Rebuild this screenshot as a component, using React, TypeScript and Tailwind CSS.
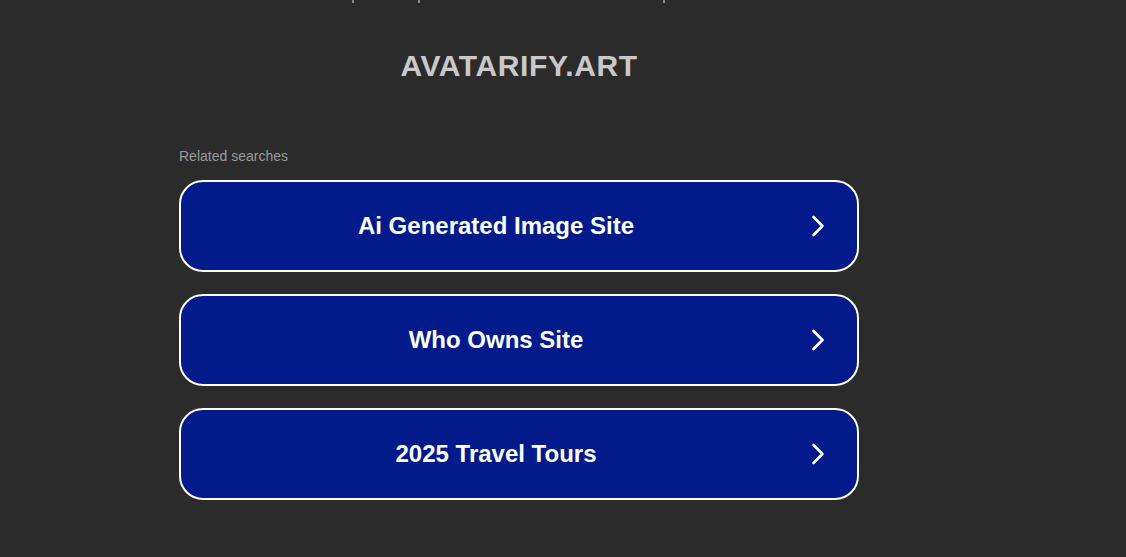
import React from "react";

const items = ["Ai Generated Image Site", "Who Owns Site", "2025 Travel Tours"];

function Chevron() {
  return (
    <svg width="14" height="22" viewBox="0 0 14 22" className="shrink-0 mr-[32px]">
      <polyline points="2.5,2 11.5,11 2.5,20" fill="none" stroke="#ffffff" strokeWidth="2.6" strokeLinecap="round" strokeLinejoin="round" />
    </svg>
  );
}

export default function App() {
  return (
    <div className="min-h-[557px] w-full bg-[#2b2b2b] overflow-hidden" style={{ fontFamily: '"Liberation Sans", Arial, sans-serif' }}>
      <div className="flex h-[4px] items-start">
        <span className="ml-[352px] block h-[3px] w-[2px] bg-[#8a8a8a]" />
        <span className="ml-[64px] block h-[3px] w-[2px] bg-[#8a8a8a]" />
        <span className="ml-[243px] block h-[3px] w-[2px] bg-[#8a8a8a]" />
      </div>
      <div className="ml-[179px] w-[680px]">
        <h1 className="pt-[44px] text-center text-[30px] leading-[36px] font-bold tracking-[0.6px] text-[#c9c9c9]">AVATARIFY.ART</h1>
        <div className="mt-[64px] text-[14px] leading-[16px] text-[#9a9a9a]">Related searches</div>
        <div className="mt-[16px] flex flex-col gap-[22px]">
          {items.map((t) => (
            <div key={t} className="flex h-[92px] items-center rounded-[24px] border-2 border-white bg-[#021a8a]">
              <div className="flex-1 text-center text-[24px] font-bold text-white">{t}</div>
              <Chevron />
            </div>
          ))}
        </div>
      </div>
    </div>
  );
}
